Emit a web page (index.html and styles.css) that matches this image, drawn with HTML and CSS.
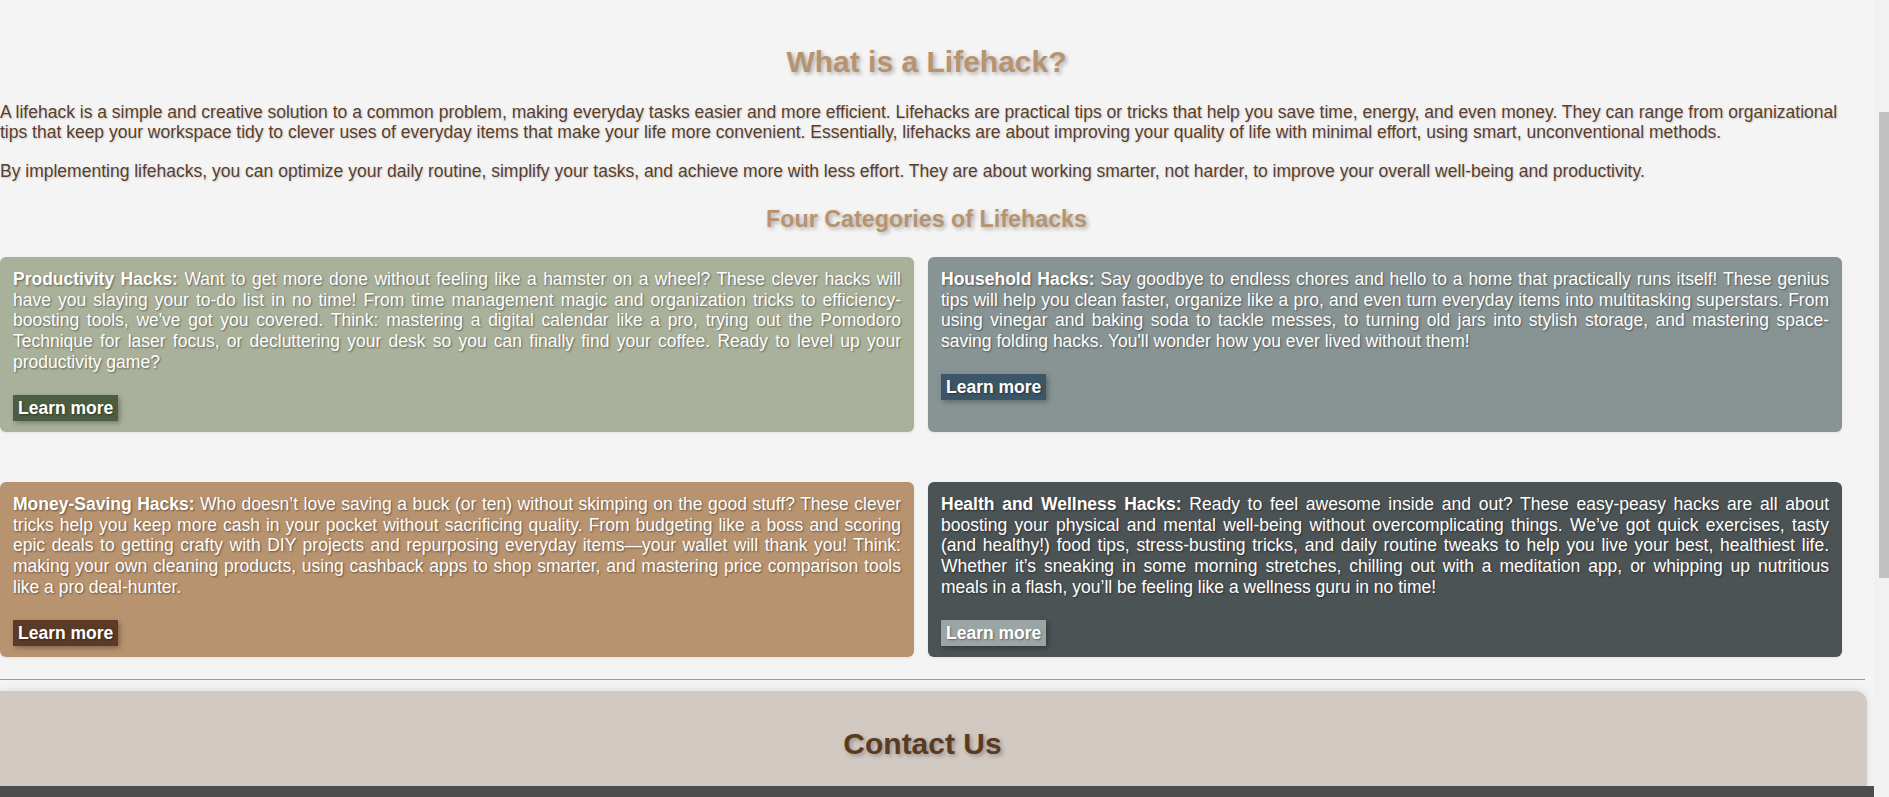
FILE: index.html
```html
<!DOCTYPE html>
<html lang="en">
<head>
<meta charset="utf-8">
<title>Lifehacks</title>
<link rel="stylesheet" href="styles.css">
</head>
<body>
<header class="site-header">
  <h1 class="site-title">Lifehacks</h1>
  <p class="site-tagline">Smart tips for everyday life</p>
</header>
<main class="main">
  <section class="about">
    <h2 class="about-title">What is a Lifehack?</h2>
    <p class="about-text">A lifehack is a simple and creative solution to a common problem, making everyday tasks easier and more efficient. Lifehacks are practical tips or tricks that help you save time, energy, and even money. They can range from organizational tips that keep your workspace tidy to clever uses of everyday items that make your life more convenient. Essentially, lifehacks are about improving your quality of life with minimal effort, using smart, unconventional methods.</p>
    <p class="about-text about-text-second">By implementing lifehacks, you can optimize your daily routine, simplify your tasks, and achieve more with less effort. They are about working smarter, not harder, to improve your overall well-being and productivity.</p>
    <h3 class="cat-title">Four Categories of Lifehacks</h3>
    <div class="cards">
      <article class="card card-productivity">
        <p class="card-text"><strong>Productivity Hacks:</strong> Want to get more done without feeling like a hamster on a wheel? These clever hacks will have you slaying your to-do list in no time! From time management magic and organization tricks to efficiency-boosting tools, we've got you covered. Think: mastering a digital calendar like a pro, trying out the Pomodoro Technique for laser focus, or decluttering your desk so you can finally find your coffee. Ready to level up your productivity game?</p>
        <a class="btn" href="#">Learn more</a>
      </article>
      <article class="card card-household">
        <p class="card-text"><strong>Household Hacks:</strong> Say goodbye to endless chores and hello to a home that practically runs itself! These genius tips will help you clean faster, organize like a pro, and even turn everyday items into multitasking superstars. From using vinegar and baking soda to tackle messes, to turning old jars into stylish storage, and mastering space-saving folding hacks. You'll wonder how you ever lived without them!</p>
        <a class="btn" href="#">Learn more</a>
      </article>
      <article class="card card-money">
        <p class="card-text"><strong>Money-Saving Hacks:</strong> Who doesn’t love saving a buck (or ten) without skimping on the good stuff? These clever tricks help you keep more cash in your pocket without sacrificing quality. From budgeting like a boss and scoring epic deals to getting crafty with DIY projects and repurposing everyday items—your wallet will thank you! Think: making your own cleaning products, using cashback apps to shop smarter, and mastering price comparison tools like a pro deal-hunter.</p>
        <a class="btn" href="#">Learn more</a>
      </article>
      <article class="card card-health">
        <p class="card-text"><strong>Health and Wellness Hacks:</strong> Ready to feel awesome inside and out? These easy-peasy hacks are all about boosting your physical and mental well-being without overcomplicating things. We’ve got quick exercises, tasty (and healthy!) food tips, stress-busting tricks, and daily routine tweaks to help you live your best, healthiest life. Whether it’s sneaking in some morning stretches, chilling out with a meditation app, or whipping up nutritious meals in a flash, you’ll be feeling like a wellness guru in no time!</p>
        <a class="btn" href="#">Learn more</a>
      </article>
    </div>
  </section>
  <hr class="divider">
  <section class="contact">
    <h2 class="contact-title">Contact Us</h2>
  </section>
</main>
<footer class="site-footer">
  <p class="footer-text">© 2024 Lifehacks. All rights reserved.</p>
</footer>
<div class="fake-scrollbar" aria-hidden="true"><div class="fake-thumb"></div></div>
<script src="script.js"></script>
</body>
</html>
```
FILE: styles.css
```css
html, body {
  margin: 0;
  padding: 0;
}
body {
  background: #f4f4f4;
  font-family: "Liberation Sans", Arial, sans-serif;
  color: #5a3e2b;
  padding-right: 15px;
}
.site-header {
  height: 190px;
  box-sizing: border-box;
  padding: 50px 20px 0;
  text-align: center;
}
.site-title {
  margin: 0;
  font-size: 40px;
  color: #b8936f;
}
.site-tagline {
  margin: 10px 0 0;
  font-size: 18px;
}
.about {
  padding: 44px 21px 0 0;
}
.about-title {
  margin: 0;
  font-size: 30px;
  line-height: 36px;
  font-weight: bold;
  text-align: center;
  color: #b8936f;
  text-shadow: 2px 2px 4px rgba(0, 0, 0, 0.3);
}
.about-text {
  margin: 22px 0 0;
  font-size: 17.5px;
  line-height: 20.25px;
  color: #5a3e2b;
  text-shadow: 1px 1px 2px rgba(0, 0, 0, 0.18);
}
.about-text-second {
  margin-top: 18px;
}
.cat-title {
  margin: 25px 0 0;
  font-size: 23.3px;
  line-height: 27px;
  font-weight: bold;
  text-align: center;
  color: #b8936f;
  text-shadow: 2px 2px 4px rgba(0, 0, 0, 0.3);
}
.cards {
  display: grid;
  grid-template-columns: 1fr 1fr;
  column-gap: 14px;
  row-gap: 50px;
  margin: 24px 11px 0 0;
}
.card {
  border-radius: 6px;
  padding: 12px 13px 11px;
  color: #ffffff;
  box-shadow: 0 1px 3px rgba(0, 0, 0, 0.08);
}
.card-text {
  margin: 0 0 22px;
  font-size: 17.5px;
  line-height: 20.8px;
  text-align: justify;
  text-shadow: 1px 1px 2px rgba(0, 0, 0, 0.45);
}
.btn {
  display: inline-block;
  padding: 3px 5px;
  font-size: 17.5px;
  line-height: 20px;
  font-weight: bold;
  color: #ffffff;
  text-decoration: none;
  text-shadow: 1px 1px 2px rgba(0, 0, 0, 0.4);
  box-shadow: 2px 2px 5px rgba(0, 0, 0, 0.3);
}
.card-productivity { background: #a9b19b; }
.card-productivity .btn { background: #4b5e3f; }
.card-household { background: #879493; }
.card-household .btn { background: #3c5567; }
.card-money { background: #b8936f; }
.card-money .btn { background: #5b3b27; }
.card-health { background: #4c5355; }
.card-health .btn { background: #9aa6a5; }
.divider {
  height: 0;
  border: 0;
  border-top: 1px solid #999999;
  margin: 22px 9px 11px 0;
}
.contact {
  margin-right: 7px;
  padding: 35px 22px 24px 0;
  background: #d3c9c3;
  border-radius: 0 12px 0 0;
  box-shadow: 0 0 8px rgba(0, 0, 0, 0.12);
}
.contact-title {
  margin: 0;
  font-size: 30px;
  line-height: 36px;
  font-weight: bold;
  text-align: center;
  color: #5c3a1e;
  text-shadow: 2px 2px 4px rgba(0, 0, 0, 0.3);
}
.site-footer {
  height: 386px;
  box-sizing: border-box;
  padding: 40px 20px;
  background: #4d4d4d;
  color: #dddddd;
  text-align: center;
}
.footer-text {
  margin: 0;
  font-size: 16px;
}
.fake-scrollbar {
  position: fixed;
  top: 0;
  right: 0;
  width: 15px;
  height: 100vh;
  background: #f1f1f1;
}
.fake-thumb {
  position: absolute;
  top: 112px;
  right: 0;
  width: 10px;
  height: 466px;
  background: #c1c1c1;
}
```
FILE: script.js
```js
(function () {
  function go() { window.scrollTo(0, 190); }
  go();
  window.addEventListener('load', go);
})();
```
